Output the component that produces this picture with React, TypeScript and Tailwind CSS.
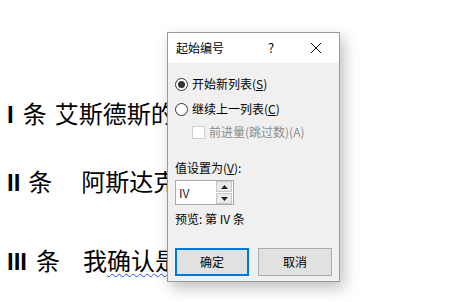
import React from 'react';

const cjk = { fontFamily: '"Liberation Serif", "Noto Sans CJK SC", serif' };
const ui = { fontFamily: '"Noto Sans CJK SC", "Liberation Sans", sans-serif' };
const num = { fontFamily: '"Liberation Sans", sans-serif' };

function Radio({ checked }: { checked?: boolean }) {
  return (
    <span className="w-[13px] h-[13px] rounded-full border border-[#333] bg-white flex items-center justify-center shrink-0">
      {checked && <span className="w-[7px] h-[7px] rounded-full bg-[#333]" />}
    </span>
  );
}

function Dialog() {
  return (
    <div
      className="absolute left-[167px] top-[32px] w-[173px] h-[250px] border border-[#9a9a9a] bg-[#f0f0f0] flex flex-col shadow-[4px_6px_14px_rgba(0,0,0,0.25)]"
      style={ui}
    >
      <div className="h-[30px] bg-white flex items-center text-[12px] text-black">
        <span className="pl-[8px] flex-1">起始编号</span>
        <span className="w-[22px] text-center mr-[28px] text-[13px]">?</span>
        <svg width="12" height="12" viewBox="0 0 12 12" className="mr-[17px]">
          <path d="M1 1 L11 11 M11 1 L1 11" stroke="#111" strokeWidth="1" />
        </svg>
      </div>
      <div className="flex-1 flex flex-col pl-[7px] pr-[7px] text-[12px] text-black">
        <div className="flex items-center gap-[4px] mt-[14px] h-[14px]">
          <Radio checked />
          <span>开始新列表(<span className="underline">S</span>)</span>
        </div>
        <div className="flex items-center gap-[4px] mt-[11px] h-[14px]">
          <Radio />
          <span>继续上一列表(<span className="underline">C</span>)</span>
        </div>
        <div className="flex items-center gap-[4px] mt-[9px] ml-[17px] h-[14px] text-[#8d8d8d]">
          <span className="w-[13px] h-[13px] border border-[#cfcfcf] bg-white shrink-0" />
          <span>前进量(跳过数)(A)</span>
        </div>
        <div className="mt-[22px] h-[14px] flex items-center">
          值设置为(<span className="underline">V</span>):
        </div>
        <div className="mt-[5px] w-[59px] h-[25px] border border-[#a9a9a9] bg-white flex items-center">
          <span className="flex-1 pl-[3px] text-[12px] text-[#222]">IV</span>
          <div className="w-[16px] h-[23px] flex flex-col gap-[1px] mr-[1px]">
            <div className="flex-1 bg-[#eaeaea] border border-[#c8c8c8] flex items-center justify-center">
              <svg width="7" height="4" viewBox="0 0 7 4"><path d="M0 4 L3.5 0 L7 4 Z" fill="#222" /></svg>
            </div>
            <div className="flex-1 bg-[#eaeaea] border border-[#c8c8c8] flex items-center justify-center">
              <svg width="7" height="4" viewBox="0 0 7 4"><path d="M0 0 L7 0 L3.5 4 Z" fill="#222" /></svg>
            </div>
          </div>
        </div>
        <div className="mt-[7px] h-[14px] flex items-center">预览: 第 IV 条</div>
        <div className="mt-[22px] flex justify-between">
          <button className="w-[74px] h-[28px] border-2 border-[#0078d7] bg-[#e1e1e1] text-[12px]">确定</button>
          <button className="w-[74px] h-[28px] border border-[#adadad] bg-[#e1e1e1] text-[12px]">取消</button>
        </div>
      </div>
    </div>
  );
}

export default function App() {
  return (
    <div className="relative w-[463px] h-[302px] bg-white overflow-hidden">
      <div className="pl-[7px] pt-[101px] text-[24px] leading-[28px] text-black whitespace-nowrap" style={cjk}>
        <div className="flex items-center">
          <span className="font-bold mr-[9px]" style={num}>I</span>
          <span>条</span>
          <span className="ml-[8px]">艾斯德斯的</span>
        </div>
        <div className="flex items-center mt-[40px]">
          <span className="font-bold mr-[8px]" style={num}>II</span>
          <span>条</span>
          <span className="ml-[29px]">阿斯达克</span>
        </div>
        <div className="flex items-center mt-[51px]">
          <span className="font-bold mr-[9px]" style={num}>III</span>
          <span>条</span>
          <span className="ml-[23px]">
            我<span className="underline decoration-wavy decoration-[#2b4ef0] decoration-1 underline-offset-[3px]">确认是</span>
          </span>
        </div>
      </div>
      <Dialog />
    </div>
  );
}
